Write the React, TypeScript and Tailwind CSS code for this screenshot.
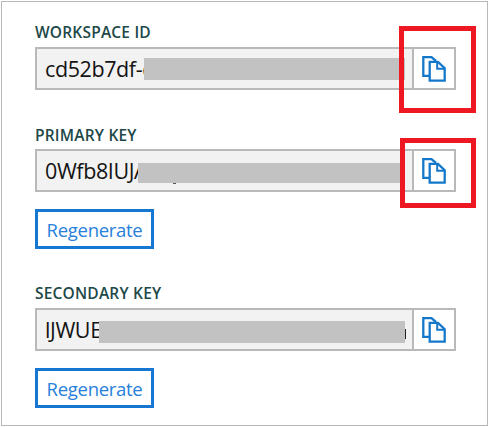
import type { ReactNode } from "react";

function CopyIcon() {
  return (
    <svg width="26" height="27" viewBox="0 0 26 27" fill="none" stroke="#1478ca" strokeWidth="2.3" className="shrink-0">
      <path d="M8.6 20.8H2.3V2.2H10.5L15 6" />
      <path d="M8.7 6.9V25.7H23.7V13.2L17 6.9Z" fill="#fff" />
      <path d="M16.2 7.5V13.8H23.5" strokeWidth="2" />
    </svg>
  );
}

function Label({ text, className }: { text: string; className: string }) {
  return <div className={`h-5 whitespace-nowrap text-[15.5px] tracking-[0.2px] font-semibold leading-5 text-[#204848] ${className}`}>{text}</div>;
}

function Field({ value, maskClass, children }: { value: string; maskClass: string; children?: ReactNode }) {
  return (
    <div className="relative flex h-[43px] w-[421px] border-2 border-[#b9b9b9] bg-[#f2f2f2]">
      <div className="flex flex-1 items-center overflow-hidden pl-2 pt-0.5">
        <span className="whitespace-nowrap text-[21.5px] tracking-[-0.4px] text-[#141414]">{value}</span>
      </div>
      <span className={`absolute bg-[#c2c2c2] ${maskClass}`} />
      {children}
      <button className="flex w-[42px] items-center justify-center border-l-2 border-[#b9b9b9] bg-white">
        <CopyIcon />
      </button>
    </div>
  );
}

function Regenerate() {
  return (
    <button className="flex h-[40px] w-[119px] items-center justify-center border-3 border-[#1677d2] bg-white pt-0.5 text-[18.5px] tracking-[-0.3px] text-[#2780da]">
      Regenerate
    </button>
  );
}

export default function App() {
  return (
    <div className="relative h-[427px] w-[489px] bg-white pt-px pl-px font-['Open_Sans','Noto_Sans',sans-serif]">
      <div className="flex h-[425px] w-[487px] flex-col items-start border border-[#b9b9b9] pl-[33px]">
        <Label text="WORKSPACE ID" className="mt-5" />
        <div className="mt-[5px]">
          <Field value="cd52b7df-c" maskClass="left-[107px] top-[9px] h-[22px] w-[261px]" />
        </div>
        <Label text="PRIMARY KEY" className="mt-[35px]" />
        <div className="mt-[4px]">
          <Field value="0Wfb8IUJA" maskClass="left-[101px] top-[12px] h-[20px] w-[267px]">
            <span className="absolute left-[136px] top-8 h-px w-[3px] bg-[#555]" />
          </Field>
        </div>
        <div className="mt-[17px]"><Regenerate /></div>
        <Label text="SECONDARY KEY" className="mt-[34px]" />
        <div className="mt-[5px]">
          <Field value="lJWUE" maskClass="left-[62px] top-[11px] h-[22px] w-[306px]">
            <span className="absolute left-[368px] top-[19px] h-[10px] w-px bg-[#222]" />
          </Field>
        </div>
        <div className="mt-[17px]"><Regenerate /></div>
      </div>
      <div className="absolute left-[399px] top-[26px] h-[87px] w-[77px] border-5 border-[#ed1822]" />
      <div className="absolute left-[400px] top-[138px] h-[70px] w-[76px] border-5 border-[#ed1822]" />
    </div>
  );
}
